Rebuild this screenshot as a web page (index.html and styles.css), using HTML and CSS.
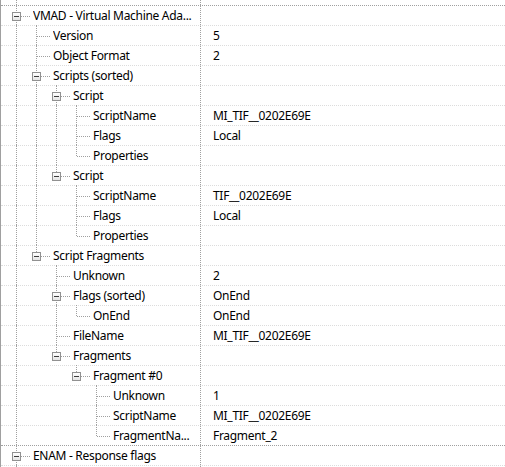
FILE: index.html
```html
<!DOCTYPE html>
<html>
<head>
<meta charset="utf-8">
<link rel="stylesheet" href="styles.css">
</head>
<body>
<div class="tree">
  <div class="row stub"><div class="name"><span class="g v"></span></div><div class="val"></div></div>

  <div class="row sep"><div class="name"><span class="g t"><i class="box"></i></span><span class="label">VMAD - Virtual Machine Ada...</span></div><div class="val"></div></div>
  <div class="row"><div class="name"><span class="g v"></span><span class="g t"></span><span class="label">Version</span></div><div class="val">5</div></div>
  <div class="row"><div class="name"><span class="g v"></span><span class="g t"></span><span class="label">Object Format</span></div><div class="val">2</div></div>
  <div class="row"><div class="name"><span class="g v"></span><span class="g t"><i class="box"></i></span><span class="label">Scripts (sorted)</span></div><div class="val"></div></div>
  <div class="row"><div class="name"><span class="g v"></span><span class="g v"></span><span class="g t"><i class="box"></i></span><span class="label">Script</span></div><div class="val"></div></div>
  <div class="row"><div class="name"><span class="g v"></span><span class="g v"></span><span class="g v"></span><span class="g t"></span><span class="label">ScriptName</span></div><div class="val">MI_TIF__0202E69E</div></div>
  <div class="row"><div class="name"><span class="g v"></span><span class="g v"></span><span class="g v"></span><span class="g t"></span><span class="label">Flags</span></div><div class="val">Local</div></div>
  <div class="row"><div class="name"><span class="g v"></span><span class="g v"></span><span class="g v"></span><span class="g l"></span><span class="label">Properties</span></div><div class="val"></div></div>
  <div class="row"><div class="name"><span class="g v"></span><span class="g v"></span><span class="g l"><i class="box"></i></span><span class="label">Script</span></div><div class="val"></div></div>
  <div class="row"><div class="name"><span class="g v"></span><span class="g v"></span><span class="g e"></span><span class="g t"></span><span class="label">ScriptName</span></div><div class="val">TIF__0202E69E</div></div>
  <div class="row"><div class="name"><span class="g v"></span><span class="g v"></span><span class="g e"></span><span class="g t"></span><span class="label">Flags</span></div><div class="val">Local</div></div>
  <div class="row"><div class="name"><span class="g v"></span><span class="g v"></span><span class="g e"></span><span class="g l"></span><span class="label">Properties</span></div><div class="val"></div></div>
  <div class="row"><div class="name"><span class="g v"></span><span class="g l"><i class="box"></i></span><span class="label">Script Fragments</span></div><div class="val"></div></div>
  <div class="row"><div class="name"><span class="g v"></span><span class="g e"></span><span class="g t"></span><span class="label">Unknown</span></div><div class="val">2</div></div>
  <div class="row"><div class="name"><span class="g v"></span><span class="g e"></span><span class="g t"><i class="box"></i></span><span class="label">Flags (sorted)</span></div><div class="val">OnEnd</div></div>
  <div class="row"><div class="name"><span class="g v"></span><span class="g e"></span><span class="g v"></span><span class="g l"></span><span class="label">OnEnd</span></div><div class="val">OnEnd</div></div>
  <div class="row"><div class="name"><span class="g v"></span><span class="g e"></span><span class="g t"></span><span class="label">FileName</span></div><div class="val">MI_TIF__0202E69E</div></div>
  <div class="row"><div class="name"><span class="g v"></span><span class="g e"></span><span class="g l"><i class="box"></i></span><span class="label">Fragments</span></div><div class="val"></div></div>
  <div class="row"><div class="name"><span class="g v"></span><span class="g e"></span><span class="g e"></span><span class="g l"><i class="box"></i></span><span class="label">Fragment #0</span></div><div class="val"></div></div>
  <div class="row"><div class="name"><span class="g v"></span><span class="g e"></span><span class="g e"></span><span class="g e"></span><span class="g t"></span><span class="label">Unknown</span></div><div class="val">1</div></div>
  <div class="row"><div class="name"><span class="g v"></span><span class="g e"></span><span class="g e"></span><span class="g e"></span><span class="g t"></span><span class="label">ScriptName</span></div><div class="val">MI_TIF__0202E69E</div></div>
  <div class="row"><div class="name"><span class="g v"></span><span class="g e"></span><span class="g e"></span><span class="g e"></span><span class="g l"></span><span class="label">FragmentNa...</span></div><div class="val">Fragment_2</div></div>

  <div class="row sep"><div class="name"><span class="g t"><i class="box"></i></span><span class="label">ENAM - Response flags</span></div><div class="val"></div></div>
  <div class="row"><div class="name"><span class="g v"></span></div><div class="val"></div></div>
</div>
</body>
</html>
```

FILE: styles.css
```css
html, body {
  margin: 0;
  padding: 0;
  background: #fff;
}
body {
  width: 505px;
  height: 467px;
  overflow: hidden;
  font-family: "Noto Sans", "Liberation Sans", sans-serif;
  font-size: 12px;
  letter-spacing: -0.3px;
  color: #000;
}
.tree {
  border-left: 1px solid #a0a0a0;
  height: 467px;
  box-sizing: border-box;
  overflow: hidden;
}
.row {
  display: flex;
  height: 20px;
  box-sizing: border-box;
  border-top: 1px dotted #dcdcdc;
}
.row.sep {
  border-top-color: #a0a0a0;
}
.row.stub {
  height: 5px;
  border-top: none;
}
.name {
  width: 200px;
  flex: none;
  box-sizing: border-box;
  padding-left: 5px;
  border-right: 1px dotted #a0a0a0;
  display: flex;
  align-items: stretch;
  line-height: 19px;
}
.val {
  flex: 1;
  padding-left: 12px;
  line-height: 19px;
  white-space: nowrap;
}
.g {
  position: relative;
  width: 20px;
  flex: none;
}
.g.v::before,
.g.t::before,
.g.l::before {
  content: "";
  position: absolute;
  left: 10px;
  top: -1px;
  bottom: 0;
  border-left: 1px dotted #a0a0a0;
}
.g.l::before {
  bottom: auto;
  height: 11px;
}
.g.t::after,
.g.l::after {
  content: "";
  position: absolute;
  left: 11px;
  top: 10px;
  width: 13px;
  border-top: 1px dotted #a0a0a0;
}
.box {
  position: absolute;
  left: 6px;
  top: 6px;
  width: 9px;
  height: 9px;
  box-sizing: border-box;
  border: 1px solid #919191;
  background: linear-gradient(#ffffff, #e4e4e4);
  z-index: 1;
}
.box::after {
  content: "";
  position: absolute;
  left: 1px;
  top: 3px;
  width: 5px;
  height: 1px;
  background: #3c3c3c;
}
.label {
  margin-left: 7px;
  white-space: nowrap;
  overflow: hidden;
  text-overflow: ellipsis;
  min-width: 0;
  padding-right: 2px;
}
```
